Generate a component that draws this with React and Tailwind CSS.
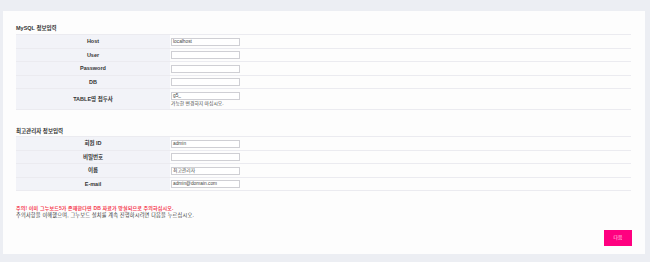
import React from "react";

const font = { fontFamily: '"Liberation Sans","Noto Sans CJK KR",sans-serif' };

function Row({ label, h, children }) {
  return (
    <div className={`flex border-b border-[#ebebf0] ${h}`}>
      <div className="w-[154px] shrink-0 bg-[#f2f3f8] flex items-center justify-center font-bold text-[5.5px] text-[#333]">
        {label}
      </div>
      <div className="flex-1 pl-[1px] flex flex-col justify-center">{children}</div>
    </div>
  );
}

function Input({ value }) {
  return (
    <div className="w-[69px] h-[8px] border border-[#cfcfd4] bg-white text-[4.8px] leading-[6px] pl-[1px] text-[#444]">
      {value}
    </div>
  );
}

export default function App() {
  return (
    <div
      style={font}
      className="w-[650px] h-[262px] bg-[#eceef3] pt-[11px] pl-[3px] pr-[5px] overflow-hidden"
    >
      <div className="bg-[#fdfdfd] h-[243px] pl-[13px] pr-[14px] pt-[14px] flex flex-col">
        <div className="text-[5.5px] leading-[6px] font-bold text-[#333] h-[6px] mb-[3px]">MySQL 정보입력</div>
        <div className="border-t border-[#ebebf0]">
          <Row label="Host" h="h-[14px]"><Input value="localhost" /></Row>
          <Row label="User" h="h-[13px]"><Input value="" /></Row>
          <Row label="Password" h="h-[14px]"><Input value="" /></Row>
          <Row label="DB" h="h-[13px]"><Input value="" /></Row>
          <Row label="TABLE명 접두사" h="h-[21px]">
            <Input value="g5_" />
            <div className="text-[4.8px] leading-[6px] text-[#444] mt-[1px]">가능한 변경하지 마십시오.</div>
          </Row>
        </div>

        <div className="text-[5.5px] leading-[6px] font-bold text-[#333] h-[6px] mt-[18px] mb-[2px]">최고관리자 정보입력</div>
        <div className="border-t border-[#ebebf0]">
          <Row label="회원 ID" h="h-[14px]"><Input value="admin" /></Row>
          <Row label="비밀번호" h="h-[13px]"><Input value="" /></Row>
          <Row label="이름" h="h-[14px]"><Input value="최고관리자" /></Row>
          <Row label="E-mail" h="h-[13px]"><Input value="admin@domain.com" /></Row>
        </div>

        <div className="mt-[14px] leading-[7px]">
          <div className="font-bold text-[5px] tracking-[0.15px] text-[#f53b50] whitespace-nowrap">주의! 이미 그누보드5가 존재한다면 DB 자료가 망실되므로 주의하십시오.</div>
          <div className="text-[5.2px] tracking-[0.18px] text-[#333] whitespace-nowrap">주의사항을 이해했으며, 그누보드 설치를 계속 진행하시려면 다음을 누르십시오.</div>
        </div>

        <div className="flex-1" />
        <div className="flex justify-end pb-[8px]">
          <button className="w-[28px] h-[16px] bg-[#ff0080] text-[#ffe6f2] text-[4.8px] flex items-center justify-center mr-[-1px]">
            다음
          </button>
        </div>
      </div>
    </div>
  );
}
